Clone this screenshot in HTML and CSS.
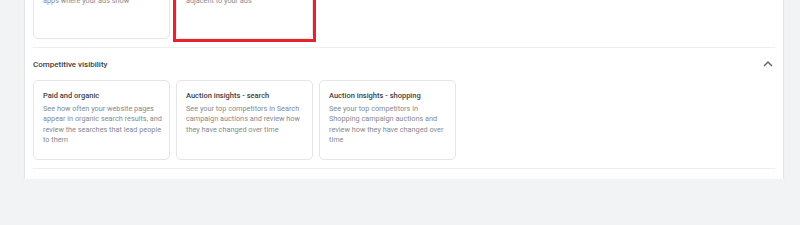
FILE: index.html
```html
<!DOCTYPE html>
<html>
<head>
<meta charset="utf-8">
<link rel="stylesheet" href="styles.css">
</head>
<body>
<div class="panel">
  <div class="row top-row">
    <div class="card top-card"><p class="desc">apps where your ads show</p></div>
    <div class="card top-card highlighted"><p class="desc">adjacent to your ads</p></div>
  </div>
  <div class="divider"></div>
  <div class="section-head">
    <span class="section-title">Competitive visibility</span>
    <svg class="chevron" viewBox="0 0 24 24" width="18" height="18"><path d="M12 8l-6 6 1.41 1.41L12 10.83l4.59 4.58L18 14z" fill="#5f6368"/></svg>
  </div>
  <div class="row">
    <div class="card">
      <div class="card-title">Paid and organic</div>
      <p class="desc">See how often your website pages appear in organic search results, and review the searches that lead people to them</p>
    </div>
    <div class="card">
      <div class="card-title">Auction insights - search</div>
      <p class="desc">See your top competitors in Search campaign auctions and review how they have changed over time</p>
    </div>
    <div class="card">
      <div class="card-title">Auction insights - shopping</div>
      <p class="desc">See your top competitors in Shopping campaign auctions and review how they have changed over time</p>
    </div>
  </div>
  <div class="divider bottom-divider"></div>
</div>
</body>
</html>
```
FILE: styles.css
```css
html, body {
  margin: 0;
  padding: 0;
  background: #f1f3f4;
  font-family: Roboto, "Liberation Sans", Arial, sans-serif;
}

.panel {
  margin-left: 25px;
  width: 742px;
  padding: 0 8px 10px 8px;
  background: #ffffff;
  box-shadow: 0 0 2px rgba(60, 64, 67, 0.25);
}

.row {
  display: flex;
  gap: 6px;
}

.card {
  box-sizing: border-box;
  width: 137px;
  padding: 9px 6px 14px 9px;
  border: 1px solid #e4e5e7;
  border-radius: 5px;
  background: #fff;
}

.top-row {
  margin-top: -24px;
}

.top-card {
  height: 63px;
  padding-top: 19px;
}

.highlighted {
  position: relative;
}

.highlighted::after {
  content: "";
  position: absolute;
  top: -5px;
  left: -4px;
  right: -4px;
  bottom: -4px;
  border: 3px solid #e8212d;
}

.desc {
  margin: 0;
  font-size: 7.3px;
  line-height: 10.3px;
  color: #868a8f;
}

.card-title {
  font-size: 7.5px;
  line-height: 11px;
  font-weight: 500;
  color: #3c4043;
  margin-bottom: 3px;
}

.divider {
  height: 1px;
  background: #eceef0;
  margin-top: 8px;
}

.section-head {
  display: flex;
  justify-content: space-between;
  align-items: center;
  height: 32px;
}

.section-title {
  font-size: 8px;
  font-weight: 500;
  color: #3c4043;
}

.chevron {
  margin-right: -2px;
}
```
